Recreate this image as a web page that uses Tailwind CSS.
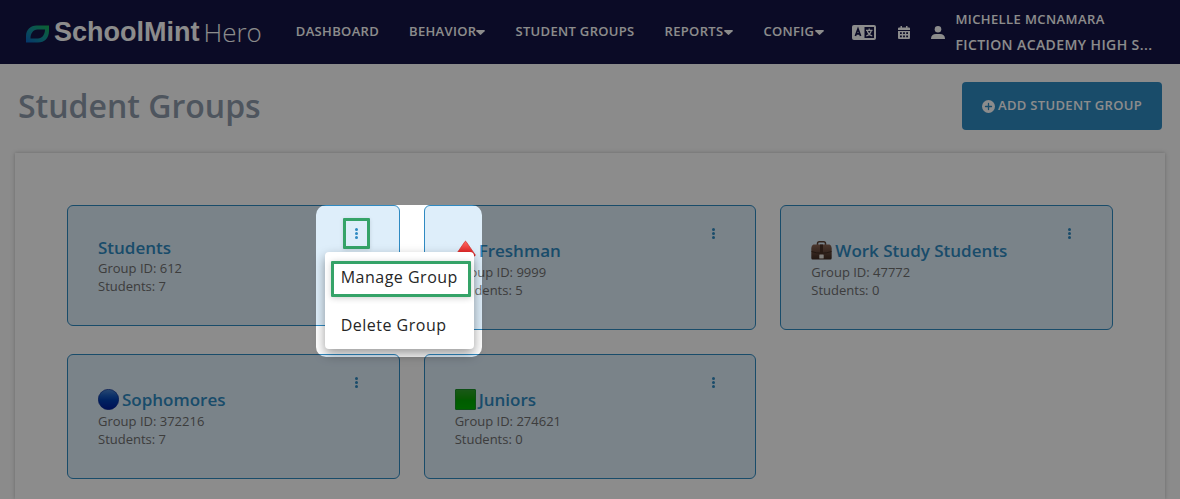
<!DOCTYPE html>
<html lang="en">
<head>
  <meta charset="UTF-8" />
  <meta name="viewport" content="width=device-width, initial-scale=1.0"/>
  <title>Student Groups - SchoolMint Hero</title>
  <script src="https://cdn.jsdelivr.net/npm/@tailwindcss/browser@4"></script>
</head>
<body class="bg-[#fdfdfd] font-['Open_Sans',sans-serif] min-h-screen flex flex-col overflow-x-hidden">

  <!-- Top bar -->
  <header class="bg-[#141445] text-white min-h-16 flex items-center pl-[26px] pr-4">
    <a href="#" class="flex items-center shrink-0">
      <svg class="w-6 h-[18px] mr-1 mt-1" viewBox="0 0 24 18" aria-hidden="true">
        <defs>
          <linearGradient id="leaf" x1="0" y1="1" x2="1" y2="0">
            <stop offset="0" stop-color="#0a62c4"/>
            <stop offset="0.5" stop-color="#13959d"/>
            <stop offset="1" stop-color="#16b556"/>
          </linearGradient>
        </defs>
        <path fill="url(#leaf)" fill-rule="evenodd" d="M0 17.500V11C0 5 4.500 .5 10.500 .5H23V6C23 13 18.500 17.500 12 17.500ZM4.500 13.500H12C16 13.500 19 9.500 19 4.500H11.500C7 4.500 4.500 8.500 4.500 13.500Z"/>
      </svg>
      <span class="font-['Liberation_Sans',sans-serif] font-bold text-[27px] leading-8">SchoolMint</span>
      <span class="font-light text-[26px] leading-8 ml-1">Hero</span>
    </a>

    <nav class="flex items-center gap-[30px] ml-[34px] text-[13px] font-semibold tracking-wide whitespace-nowrap">
      <a href="#">DASHBOARD</a>
      <a href="#" class="flex items-center">BEHAVIOR
        <svg class="w-[9px] h-[5px] mt-px" viewBox="0 0 9 5" fill="currentColor" aria-hidden="true"><path d="M.8 0H8.200Q9.300 .3 8.600 1.200L5.200 4.600Q4.500 5.200 3.800 4.600L.4 1.200Q-.3 .3 .8 0Z"/></svg>
      </a>
      <a href="#">STUDENT GROUPS</a>
      <a href="#" class="flex items-center">REPORTS
        <svg class="w-[9px] h-[5px] mt-px ml-px" viewBox="0 0 9 5" fill="currentColor" aria-hidden="true"><path d="M.8 0H8.200Q9.300 .3 8.600 1.200L5.200 4.600Q4.500 5.200 3.800 4.600L.4 1.200Q-.3 .3 .8 0Z"/></svg>
      </a>
      <a href="#" class="flex items-center">CONFIG
        <svg class="w-[9px] h-[5px] mt-px ml-px" viewBox="0 0 9 5" fill="currentColor" aria-hidden="true"><path d="M.8 0H8.200Q9.300 .3 8.600 1.200L5.200 4.600Q4.500 5.200 3.800 4.600L.4 1.200Q-.3 .3 .8 0Z"/></svg>
      </a>
    </nav>

    <button type="button" aria-label="Language" class="ml-7 shrink-0">
      <svg class="w-6 h-[15px] block" viewBox="0 0 24 15" aria-hidden="true">
        <rect width="24" height="15" rx="2" fill="#fff"/>
        <rect x="12.500" y="2" width="9.500" height="11" fill="#141445"/>
        <path d="M3.400 11L6 4L8.600 11M4.300 8.800H7.700" fill="none" stroke="#141445" stroke-width="1.700"/>
        <path d="M14 5.300H20.500M17.200 3.500V5.300M19.300 5.500Q18.300 9.500 14.300 11M15.200 5.500Q16.200 9.500 20.300 11" fill="none" stroke="#fff" stroke-width="1.200"/>
      </svg>
    </button>
    <button type="button" aria-label="Calendar" class="ml-[22px] shrink-0">
      <svg class="w-3 h-[13px] block" viewBox="0 0 12 13" aria-hidden="true">
        <path fill="#fff" d="M2.500 0H4V1.500H8V0H9.500V1.500H11Q12 1.500 12 2.500V4H0V2.500Q0 1.500 1 1.500H2.500ZM0 5H12V12Q12 13 11 13H1Q0 13 0 12Z"/>
        <path fill="#141445" d="M2 6.300H3.800V8H2ZM5.100 6.300H6.900V8H5.100ZM8.200 6.300H10V8H8.200ZM2 9.500H3.800V11.200H2ZM5.100 9.500H6.900V11.200H5.100ZM8.200 9.500H10V11.200H8.200Z"/>
      </svg>
    </button>
    <a href="#" class="flex items-center ml-[21px] min-w-0 tracking-wide font-semibold">
      <svg class="w-[14px] h-[13px] mr-2.5 shrink-0" viewBox="0 0 14 13" fill="#fff" aria-hidden="true"><circle cx="7" cy="3.300" r="3.300"/><path d="M.5 13Q0 13 0 12.400Q.3 8 5 7.900H9Q13.700 8 14 12.400Q14 13 13.500 13Z"/></svg>
      <span class="min-w-0 flex flex-col whitespace-nowrap">
        <span class="text-[13px] leading-[26px]">MICHELLE MCNAMARA</span>
        <span class="text-[14px] leading-[26px]">FICTION ACADEMY HIGH S...</span>
      </span>
    </a>
  </header>

  <div class="flex items-center justify-between px-[18px] pt-[18px] pb-[23px]">
    <h1 class="text-[32px] leading-[48px] font-semibold text-[#8f9bab]">Student Groups</h1>
    <button type="button" class="bg-[#2f8ac2] text-white h-12 px-5 rounded-[4px] flex items-center gap-[3px] text-[13px] font-semibold tracking-wide">
      <svg class="w-[13px] h-[13px]" viewBox="0 0 13 13" aria-hidden="true"><circle cx="6.500" cy="6.500" r="6.500" fill="#fff"/><path d="M6.500 3.500V9.500M3.500 6.500H9.500" stroke="#2f8ac2" stroke-width="1.300" stroke-linecap="round"/></svg>
      ADD STUDENT GROUP
    </button>
  </div>

  <main class="mx-[15px] flex-1 bg-white shadow-[0_0_4px_rgba(0,0,0,0.25)] px-[52px] pt-[52px] pb-5">
    <div class="grid grid-cols-3 gap-6 items-start">

      <section class="relative bg-[#deeefa] border border-[#2f8ac2] rounded-[6px] p-[30px]">
        <h2 class="text-[17px] leading-[23px] font-semibold text-[#2f8ac2]">Students</h2>
        <p class="text-[13px] leading-[18px] text-[#6f6f6f]">Group ID: 612</p>
        <p class="text-[13px] leading-[18px] text-[#6f6f6f]">Students: 7</p>
        <div class="absolute top-3 right-[29px]">
          <button type="button" aria-label="Group options" class="w-[27px] h-[31px] border-3 border-[#35a368] rounded-[1px] flex items-center justify-center shadow-[0_1px_4px_rgba(0,0,0,0.12)]">
            <svg class="w-[3px] h-[11px]" viewBox="0 0 3 11" fill="#2f8ac2" aria-hidden="true"><circle cx="1.500" cy="1.500" r="1.500"/><circle cx="1.500" cy="5.500" r="1.500"/><circle cx="1.500" cy="9.500" r="1.500"/></svg>
          </button>
          <!-- Options menu -->
          <div class="absolute z-20 top-[34px] -left-[18px] w-[149px] bg-white rounded-[4px] shadow-[0_5px_12px_rgba(0,0,0,0.4)] text-[16px] text-[#262626] tracking-[0.5px] whitespace-nowrap">
            <button type="button" class="relative w-full h-[49px] px-4 text-left block">Manage Group
              <span class="absolute left-1.5 right-[3px] top-[9px] h-9 border-3 border-[#35a368] rounded-[1px] shadow-[0_1px_6px_rgba(0,0,0,0.2)]"></span>
            </button>
            <button type="button" class="w-full h-12 px-4 text-left block">Delete Group</button>
          </div>
          <!-- Spotlight: dims everything outside of it -->
          <div class="absolute z-50 -top-[13px] -left-[27px] w-[166px] h-[152px] rounded-[10px] shadow-[0_0_0_3000px_rgba(0,0,0,0.45)] pointer-events-none"></div>
        </div>
      </section>

      <section class="relative bg-[#deeefa] border border-[#2f8ac2] rounded-[6px] p-[30px]">
        <h2 class="text-[17px] leading-[29px] -mb-0.5 font-semibold text-[#2f8ac2] flex items-center gap-[3px]">
          <svg class="w-[21px] h-[21px]" viewBox="0 0 21 21" aria-hidden="true">
            <defs><linearGradient id="red" x1="0" y1="0" x2="0" y2="1"><stop offset="0" stop-color="#ff6a63"/><stop offset="1" stop-color="#d80f12"/></linearGradient></defs>
            <path d="M10 1.500Q10.500 1 11 1.500L20 14.500Q20.500 16 19.500 16H1.500Q.5 16 1 14.500Z" fill="url(#red)" stroke="#d2302c" stroke-width=".7"/>
          </svg>
          Freshman
        </h2>
        <p class="text-[13px] leading-[18px] text-[#6f6f6f]">Group ID: 9999</p>
        <p class="text-[13px] leading-[18px] text-[#6f6f6f]">Students: 5</p>
        <button type="button" aria-label="Group options" class="absolute top-3 right-[29px] w-[26px] h-[31px] flex items-center justify-center">
          <svg class="w-[3px] h-[11px]" viewBox="0 0 3 11" fill="#2f8ac2" aria-hidden="true"><circle cx="1.500" cy="1.500" r="1.500"/><circle cx="1.500" cy="5.500" r="1.500"/><circle cx="1.500" cy="9.500" r="1.500"/></svg>
        </button>
      </section>

      <section class="relative bg-[#deeefa] border border-[#2f8ac2] rounded-[6px] p-[30px]">
        <h2 class="text-[17px] leading-[29px] -mb-0.5 font-semibold text-[#2f8ac2] flex items-center gap-[3px]">
          <svg class="w-[21px] h-[21px]" viewBox="0 0 21 21" aria-hidden="true">
            <defs><linearGradient id="brown" x1="0" y1="0" x2="0" y2="1"><stop offset="0" stop-color="#8a6553"/><stop offset="1" stop-color="#3f2b22"/></linearGradient></defs>
            <path d="M6.500 5V3.500Q6.500 1.700 8.300 1.700H12.700Q14.500 1.700 14.500 3.500V5" fill="none" stroke="#5d4234" stroke-width="1.500"/>
            <path d="M2.500 4.500H18.500Q20.500 5 20.700 8V18Q20.700 19.500 19.500 19.500H1.500Q.3 19.500 .3 18V8Q.5 5 2.500 4.500Z" fill="url(#brown)"/>
            <path d="M.5 11.500Q10.500 15 20.500 11.500" fill="none" stroke="#36241c" stroke-width=".8"/>
            <rect x="9" y="4.500" width="3" height="10" fill="#4a3126"/>
            <rect x="8.300" y="14.500" width="4.400" height="4" rx=".6" fill="#e8e4df"/>
          </svg>
          Work Study Students
        </h2>
        <p class="text-[13px] leading-[18px] text-[#6f6f6f]">Group ID: 47772</p>
        <p class="text-[13px] leading-[18px] text-[#6f6f6f]">Students: 0</p>
        <button type="button" aria-label="Group options" class="absolute top-3 right-[29px] w-[26px] h-[31px] flex items-center justify-center">
          <svg class="w-[3px] h-[11px]" viewBox="0 0 3 11" fill="#2f8ac2" aria-hidden="true"><circle cx="1.500" cy="1.500" r="1.500"/><circle cx="1.500" cy="5.500" r="1.500"/><circle cx="1.500" cy="9.500" r="1.500"/></svg>
        </button>
      </section>

      <section class="relative bg-[#deeefa] border border-[#2f8ac2] rounded-[6px] p-[30px]">
        <h2 class="text-[17px] leading-[29px] -mb-0.5 font-semibold text-[#2f8ac2] flex items-center gap-[3px]">
          <svg class="w-[21px] h-[21px]" viewBox="0 0 21 21" aria-hidden="true">
            <defs><linearGradient id="blue" x1="0" y1="0" x2="0" y2="1"><stop offset="0" stop-color="#4d86d0"/><stop offset=".3" stop-color="#1a5cc0"/><stop offset=".55" stop-color="#003db0"/><stop offset="1" stop-color="#001c9a"/></linearGradient></defs>
            <circle cx="10.500" cy="10.500" r="10.200" fill="url(#blue)" stroke="#00208a" stroke-width=".6"/>
          </svg>
          Sophomores
        </h2>
        <p class="text-[13px] leading-[18px] text-[#6f6f6f]">Group ID: 372216</p>
        <p class="text-[13px] leading-[18px] text-[#6f6f6f]">Students: 7</p>
        <button type="button" aria-label="Group options" class="absolute top-3 right-[29px] w-[26px] h-[31px] flex items-center justify-center">
          <svg class="w-[3px] h-[11px]" viewBox="0 0 3 11" fill="#2f8ac2" aria-hidden="true"><circle cx="1.500" cy="1.500" r="1.500"/><circle cx="1.500" cy="5.500" r="1.500"/><circle cx="1.500" cy="9.500" r="1.500"/></svg>
        </button>
      </section>

      <section class="relative bg-[#deeefa] border border-[#2f8ac2] rounded-[6px] p-[30px]">
        <h2 class="text-[17px] leading-[29px] -mb-0.5 font-semibold text-[#2f8ac2] flex items-center gap-[3px]">
          <svg class="w-[21px] h-[21px]" viewBox="0 0 21 21" aria-hidden="true">
            <defs><linearGradient id="green" x1="0" y1="0" x2="0" y2="1"><stop offset="0" stop-color="#30a02c"/><stop offset=".45" stop-color="#12a008"/><stop offset=".55" stop-color="#00a800"/><stop offset="1" stop-color="#00b400"/></linearGradient></defs>
            <rect x=".5" y=".5" width="20" height="20" rx=".5" fill="url(#green)" stroke="#1a9028"/>
          </svg>
          Juniors
        </h2>
        <p class="text-[13px] leading-[18px] text-[#6f6f6f]">Group ID: 274621</p>
        <p class="text-[13px] leading-[18px] text-[#6f6f6f]">Students: 0</p>
        <button type="button" aria-label="Group options" class="absolute top-3 right-[29px] w-[26px] h-[31px] flex items-center justify-center">
          <svg class="w-[3px] h-[11px]" viewBox="0 0 3 11" fill="#2f8ac2" aria-hidden="true"><circle cx="1.500" cy="1.500" r="1.500"/><circle cx="1.500" cy="5.500" r="1.500"/><circle cx="1.500" cy="9.500" r="1.500"/></svg>
        </button>
      </section>

    </div>
  </main>
</body>
</html>
